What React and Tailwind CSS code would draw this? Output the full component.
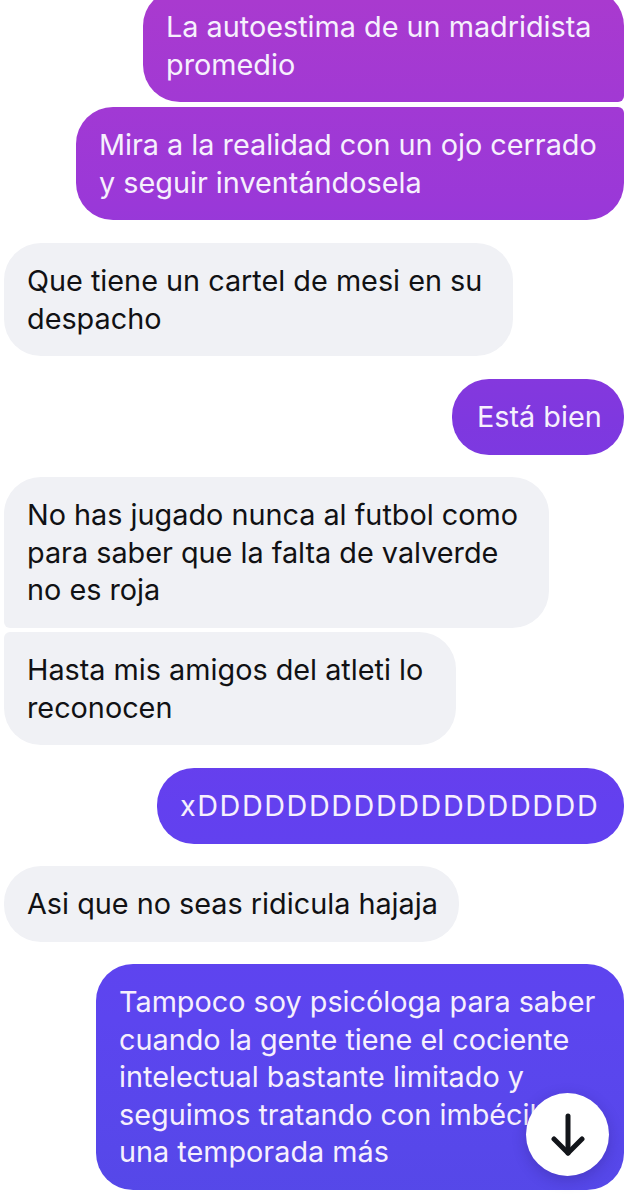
import { Fragment } from "react";

const sentBg = "bg-fixed bg-[linear-gradient(180deg,#a93acf_0%,#9a38d8_17%,#7f38df_35%,#6340ef_67%,#5c45ef_85%,#5548e8_100%)]";

const messages = [
  { id: 1, mine: true, w: "w-[481px]", mt: "mt-0", corners: "rounded-[37px] rounded-br-[6px]", lines: ["La autoestima de un madridista", "promedio"] },
  { id: 2, mine: true, w: "w-[548px]", mt: "mt-[5px]", corners: "rounded-[37px] rounded-tr-[6px]", lines: ["Mira a la realidad con un ojo cerrado", "y seguir inventándosela"] },
  { id: 3, w: "w-[509px]", mt: "mt-[23px]", corners: "rounded-[37px]", lines: ["Que tiene un cartel de mesi en su", "despacho"] },
  { id: 4, mine: true, w: "w-[172px]", mt: "mt-[23px]", pad: "pl-[25px]", corners: "rounded-[37px]", lines: ["Está bien"] },
  { id: 5, w: "w-[545px]", mt: "mt-[22.5px]", corners: "rounded-[37px] rounded-bl-[6px]", lines: ["No has jugado nunca al futbol como", "para saber que la falta de valverde", "no es roja"] },
  { id: 6, w: "w-[452px]", mt: "mt-[4.5px]", corners: "rounded-[37px] rounded-tl-[6px]", lines: ["Hasta mis amigos del atleti lo", "reconocen"] },
  { id: 7, mine: true, w: "w-[467px]", mt: "mt-[23px]", track: "tracking-[1.55px]", corners: "rounded-[37px]", lines: ["xDDDDDDDDDDDDDDDDDD"] },
  { id: 8, w: "w-[455px]", mt: "mt-[22.5px]", corners: "rounded-[37px]", lines: ["Asi que no seas ridicula hajaja"] },
  { id: 9, mine: true, w: "w-[528px]", mt: "mt-[22.5px]", corners: "rounded-[37px]", lines: ["Tampoco soy psicóloga para saber", "cuando la gente tiene el cociente", "intelectual bastante limitado y", "seguimos tratando con imbéciles", "una temporada más"] },
];

function Bubble({ msg }) {
  const look = msg.mine ? `${sentBg} text-[#f6f0fd] self-end` : "bg-[#f0f1f5] text-[#111114] self-start";
  return (
    <div className={`${msg.w} ${msg.mt} ${msg.corners} ${look} ${msg.track || ""} ${msg.pad || "pl-[23px]"} py-[19px] whitespace-nowrap`}>
      {msg.lines.map((line, i) => (
        <Fragment key={i}>
          {line}
          {i < msg.lines.length - 1 && <br />}
        </Fragment>
      ))}
    </div>
  );
}

export default function App() {
  return (
    <div className="relative h-[1200px] w-[631px] overflow-hidden bg-white font-['Inter',sans-serif] text-[28.8px] leading-[37.5px]">
      <div className="flex flex-col pl-[4px] pr-[7px] -mt-[11px]">
        {messages.map((m) => (
          <Bubble key={m.id} msg={m} />
        ))}
      </div>
      <button className="absolute left-[526px] top-[1093px] flex h-[83px] w-[83px] items-center justify-center rounded-full bg-white shadow-[0_4px_14px_rgba(30,20,90,0.25)]">
        <svg width="34" height="44" viewBox="0 0 34 44" fill="none" stroke="#12151a" strokeWidth="5" strokeLinecap="round" strokeLinejoin="round">
          <path d="M17 3v37" />
          <path d="M3 26l14 14 14-14" />
        </svg>
      </button>
    </div>
  );
}
